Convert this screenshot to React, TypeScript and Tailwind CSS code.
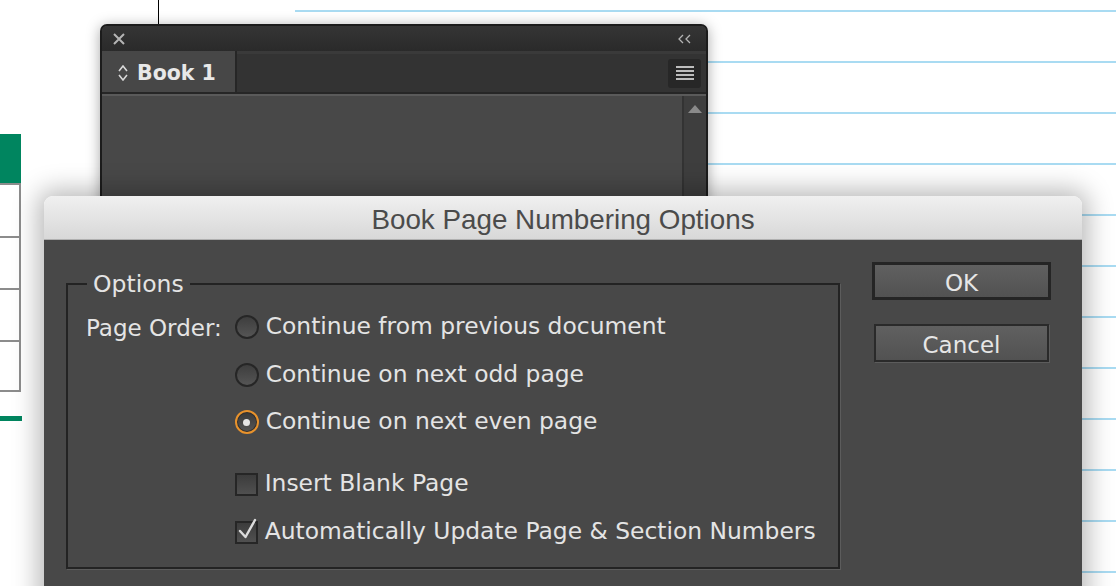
import React from "react";

const ui = { fontFamily: '"DejaVu Sans", "Noto Sans", sans-serif' };
const helv = { fontFamily: '"Liberation Sans", Arial, sans-serif' };

function Radio({ checked }: { checked?: boolean }) {
  if (checked) {
    return (
      <span className="flex h-[24px] w-[24px] items-center justify-center rounded-full border-2 border-[#e8922c] bg-[#2e2e2e]">
        <span className="flex h-[18px] w-[18px] items-center justify-center rounded-full bg-gradient-to-b from-[#3a3a3a] to-[#555]">
          <span className="h-[7px] w-[7px] rounded-full bg-[#e6e6e6]" />
        </span>
      </span>
    );
  }
  return (
    <span className="flex h-[24px] w-[24px] items-center justify-center rounded-full bg-[#262626]">
      <span className="h-[20px] w-[20px] rounded-full bg-gradient-to-b from-[#3e3e3e] to-[#555]" />
    </span>
  );
}

function Check({ checked }: { checked?: boolean }) {
  return (
    <span className="relative flex h-[23px] w-[23px] items-center justify-center border-2 border-[#262626] bg-gradient-to-b from-[#3c3c3c] to-[#505050]">
      {checked && (
        <svg width="22" height="24" viewBox="0 0 22 24" className="absolute left-[0px] top-[-6px]">
          <path d="M3 14 L8.5 20 L18 3" fill="none" stroke="#dcdcdc" strokeWidth="2.4" strokeLinecap="round" strokeLinejoin="round" />
        </svg>
      )}
    </span>
  );
}

function Row({ children, control }: { children: React.ReactNode; control: React.ReactNode }) {
  return (
    <div className="flex h-[24px] items-center gap-[7px]">
      {control}
      <span className="text-[23.4px] leading-none text-[#e4e4e4]">{children}</span>
    </div>
  );
}

export default function App() {
  return (
    <div className="relative h-[586px] w-[1116px] overflow-hidden bg-white" style={ui}>
      {/* background document: blue guide lines */}
      <div className="absolute left-[295px] top-[10px] flex w-[821px] flex-col gap-[49px]">
        {Array.from({ length: 12 }).map((_, i) => (
          <div key={i} className="h-[2px] bg-[#a9dbf2]" />
        ))}
      </div>
      {/* vertical line */}
      <div className="absolute left-[158px] top-0 h-[25px] w-[1px] bg-black" />
      {/* left table */}
      <div className="absolute left-0 top-[134px] flex w-[21px] flex-col">
        <div className="h-[49px] bg-[#00855f]" />
        <div className="flex flex-col border-r-2 border-[#8c8c8c]">
          <div className="h-[53px] border-t-2 border-[#8c8c8c]" />
          <div className="h-[52px] border-t-2 border-[#8c8c8c]" />
          <div className="h-[52px] border-t-2 border-[#8c8c8c]" />
          <div className="h-[52px] border-y-2 border-[#8c8c8c]" />
        </div>
        <div className="mt-[24px] h-[5px] w-[22px] bg-[#00855f]" />
      </div>

      {/* Book panel */}
      <div className="absolute left-[100px] top-[24px] flex h-[200px] w-[608px] flex-col overflow-hidden rounded-t-[7px] border-2 border-[#1c1c1c] bg-[#474747] shadow-[0_2px_14px_rgba(0,0,0,0.35)]">
        <div className="flex h-[25px] items-center justify-between bg-gradient-to-b from-[#353535] to-[#2a2a2a] px-[10px]">
          <svg width="14" height="14" viewBox="0 0 14 14">
            <path d="M2 2 L12 12 M12 2 L2 12" stroke="#b4b4b4" strokeWidth="2" />
          </svg>
          <svg width="14" height="10" viewBox="0 0 14 10" className="mr-[4px]">
            <path d="M5 1 L1 5 L5 9 M12 1 L8 5 L12 9" fill="none" stroke="#b4b4b4" strokeWidth="1.3" />
          </svg>
        </div>
        <div className="flex h-[43px] items-stretch border-b-2 border-[#262626] bg-[#2e2e2e]">
          <div className="flex w-[135px] items-center gap-[8px] border-r-2 border-[#262626] bg-[#474747] pl-[15px] pt-[3px]">
            <svg width="12" height="20" viewBox="0 0 12 20">
              <path d="M2 8 L6 3 L10 8 M2 12 L6 17 L10 12" fill="none" stroke="#d8d8d8" strokeWidth="1.6" />
            </svg>
            <span className="text-[20.5px] font-bold leading-none text-[#e8e8e8]">Book 1</span>
          </div>
          <div className="flex flex-1 items-center justify-end border-t-[3px] border-[#3a3a3a] bg-[#333] pr-[5px]">
            <div className="flex h-[29px] w-[33px] flex-col items-center justify-center gap-[2px] rounded-[3px] bg-[#272727]">
              <div className="h-[2px] w-[18px] bg-[#bdbdbd]" />
              <div className="h-[2px] w-[18px] bg-[#bdbdbd]" />
              <div className="h-[2px] w-[18px] bg-[#bdbdbd]" />
              <div className="h-[2px] w-[18px] bg-[#bdbdbd]" />
            </div>
          </div>
        </div>
        <div className="flex flex-1 border-t-2 border-[#5a5a5a]">
          <div className="flex-1 bg-[#484848]" />
          <div className="flex w-[24px] justify-center border-l-2 border-[#333] bg-[#3e3e3e] pt-[8px]">
            <svg width="16" height="10" viewBox="0 0 16 10">
              <path d="M8 1 L15 9 L1 9 Z" fill="#8a8a8a" />
            </svg>
          </div>
        </div>
      </div>

      {/* Dialog */}
      <div className="absolute left-[44px] top-[196px] flex h-[420px] w-[1038px] flex-col overflow-hidden rounded-t-[9px] shadow-[0_0_26px_6px_rgba(0,0,0,0.28)]">
        <div className="flex h-[44px] items-center justify-center border-b border-[#b0b0b0] bg-gradient-to-b from-[#f0f0f0] to-[#d8d8d8] pt-[4px]">
          <span className="text-[27.8px] leading-none text-[#4b4b4b]" style={helv}>
            Book Page Numbering Options
          </span>
        </div>
        <div className="flex flex-1 items-start gap-[32px] bg-[#484848] pl-[22px] pt-[22px]">
          {/* group box */}
          <div className="relative mt-[21px] h-[286px] w-[774px] border-2 border-[#232323] shadow-[1px_1px_0_#5c5c5c]">
            <span className="absolute left-[19px] top-[-12px] bg-[#484848] px-[6px] text-[23.5px] leading-none text-[#e4e4e4]">
              Options
            </span>
            <div className="flex pl-[18px] pt-[30px]">
              <span className="mr-[13px] mt-[2px] text-[23px] leading-none text-[#e4e4e4]">Page Order:</span>
              <div className="flex flex-col">
                <div className="flex flex-col gap-[23.5px]">
                  <Row control={<Radio />}>Continue from previous document</Row>
                  <Row control={<Radio />}>Continue on next odd page</Row>
                  <Row control={<Radio checked />}>Continue on next even page</Row>
                </div>
                <div className="mt-[38px] flex flex-col gap-[24px]">
                  <Row control={<Check />}>Insert Blank Page</Row>
                  <Row control={<Check checked />}>Automatically Update Page &amp; Section Numbers</Row>
                </div>
              </div>
            </div>
          </div>
          {/* buttons */}
          <div className="flex flex-col items-center gap-[24px]">
            <div className="flex h-[38px] w-[179px] items-center justify-center border-[3px] border-[#252525] bg-gradient-to-b from-[#606060] to-[#525252] pt-[4px]">
              <span className="text-[23px] leading-none text-[#e6e6e6]">OK</span>
            </div>
            <div className="flex h-[38px] w-[175px] items-center justify-center border-2 border-[#2a2a2a] bg-gradient-to-b from-[#606060] to-[#525252] pt-[4px] shadow-[1px_1px_0_#5c5c5c]">
              <span className="text-[23px] leading-none text-[#e6e6e6]">Cancel</span>
            </div>
          </div>
        </div>
      </div>
    </div>
  );
}
